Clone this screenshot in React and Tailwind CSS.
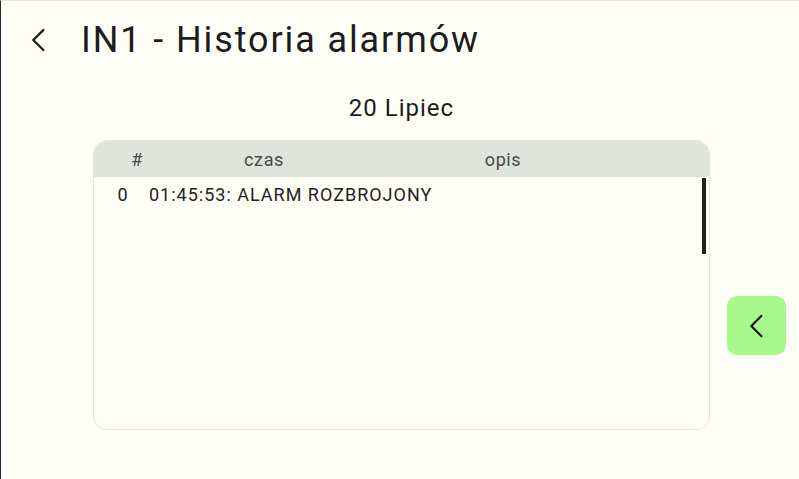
import React from "react";

function Chevron({ className, strokeWidth = 2 }) {
  return (
    <svg viewBox="0 0 24 24" className={className} fill="none" stroke="currentColor" strokeWidth={strokeWidth} strokeLinecap="square" strokeLinejoin="miter">
      <path d="M15 5 L8 12 L15 19" />
    </svg>
  );
}

export default function App() {
  const rows = [{ id: 0, text: "01:45:53: ALARM ROZBROJONY" }];
  return (
    <div
      className="w-[799px] h-[479px] bg-[#fefef6] border-l border-l-[#1f2937] border-t border-t-[#e4e4e0] flex flex-col overflow-hidden text-[#1c1c1c]"
      style={{ fontFamily: "Roboto, 'Liberation Sans', sans-serif" }}
    >
      <div className="flex items-center h-[78px] pl-[21px]">
        <Chevron className="w-[34px] h-[34px] text-[#1c1c1c]" strokeWidth={1.6} />
        <h1 className="ml-[25px] text-[36px] leading-none font-normal tracking-[1.9px]">IN1 - Historia alarmów</h1>
      </div>
      <div className="flex justify-center h-[54px] items-center pl-[3px] pt-[3px]">
        <span className="text-[24px] leading-none tracking-[1px]">20 Lipiec</span>
      </div>
      <div className="flex items-start pl-[92px] pr-[12px]">
        <div className="w-[617px] h-[290px] mt-[7px] rounded-[14px] border border-[#e5e6e0] overflow-hidden flex flex-col">
          <div className="h-[36px] bg-[#dfe4dc] flex items-center text-[18px] tracking-[0.6px] text-[#4a4a4a] shrink-0">
            <span className="w-[86px] text-center">#</span>
            <span className="w-[168px] text-center">czas</span>
            <span className="w-[310px] text-center">opis</span>
          </div>
          <div className="relative flex-1">
            {rows.map((r) => (
              <div key={r.id} className="flex items-center h-[34px] text-[18px] tracking-[1px] text-[#222]">
                <span className="w-[55px] pl-[3px] text-center">{r.id}</span>
                <span>{r.text}</span>
              </div>
            ))}
            <div className="absolute right-[3px] top-[1px] w-[4px] h-[76px] bg-[#222]" />
          </div>
        </div>
        <button className="ml-[17px] mt-[163px] w-[59px] h-[59px] rounded-[10px] bg-[#a6f98a] flex items-center justify-center">
          <Chevron className="w-[34px] h-[34px] text-[#111]" strokeWidth={1.5} />
        </button>
      </div>
    </div>
  );
}
